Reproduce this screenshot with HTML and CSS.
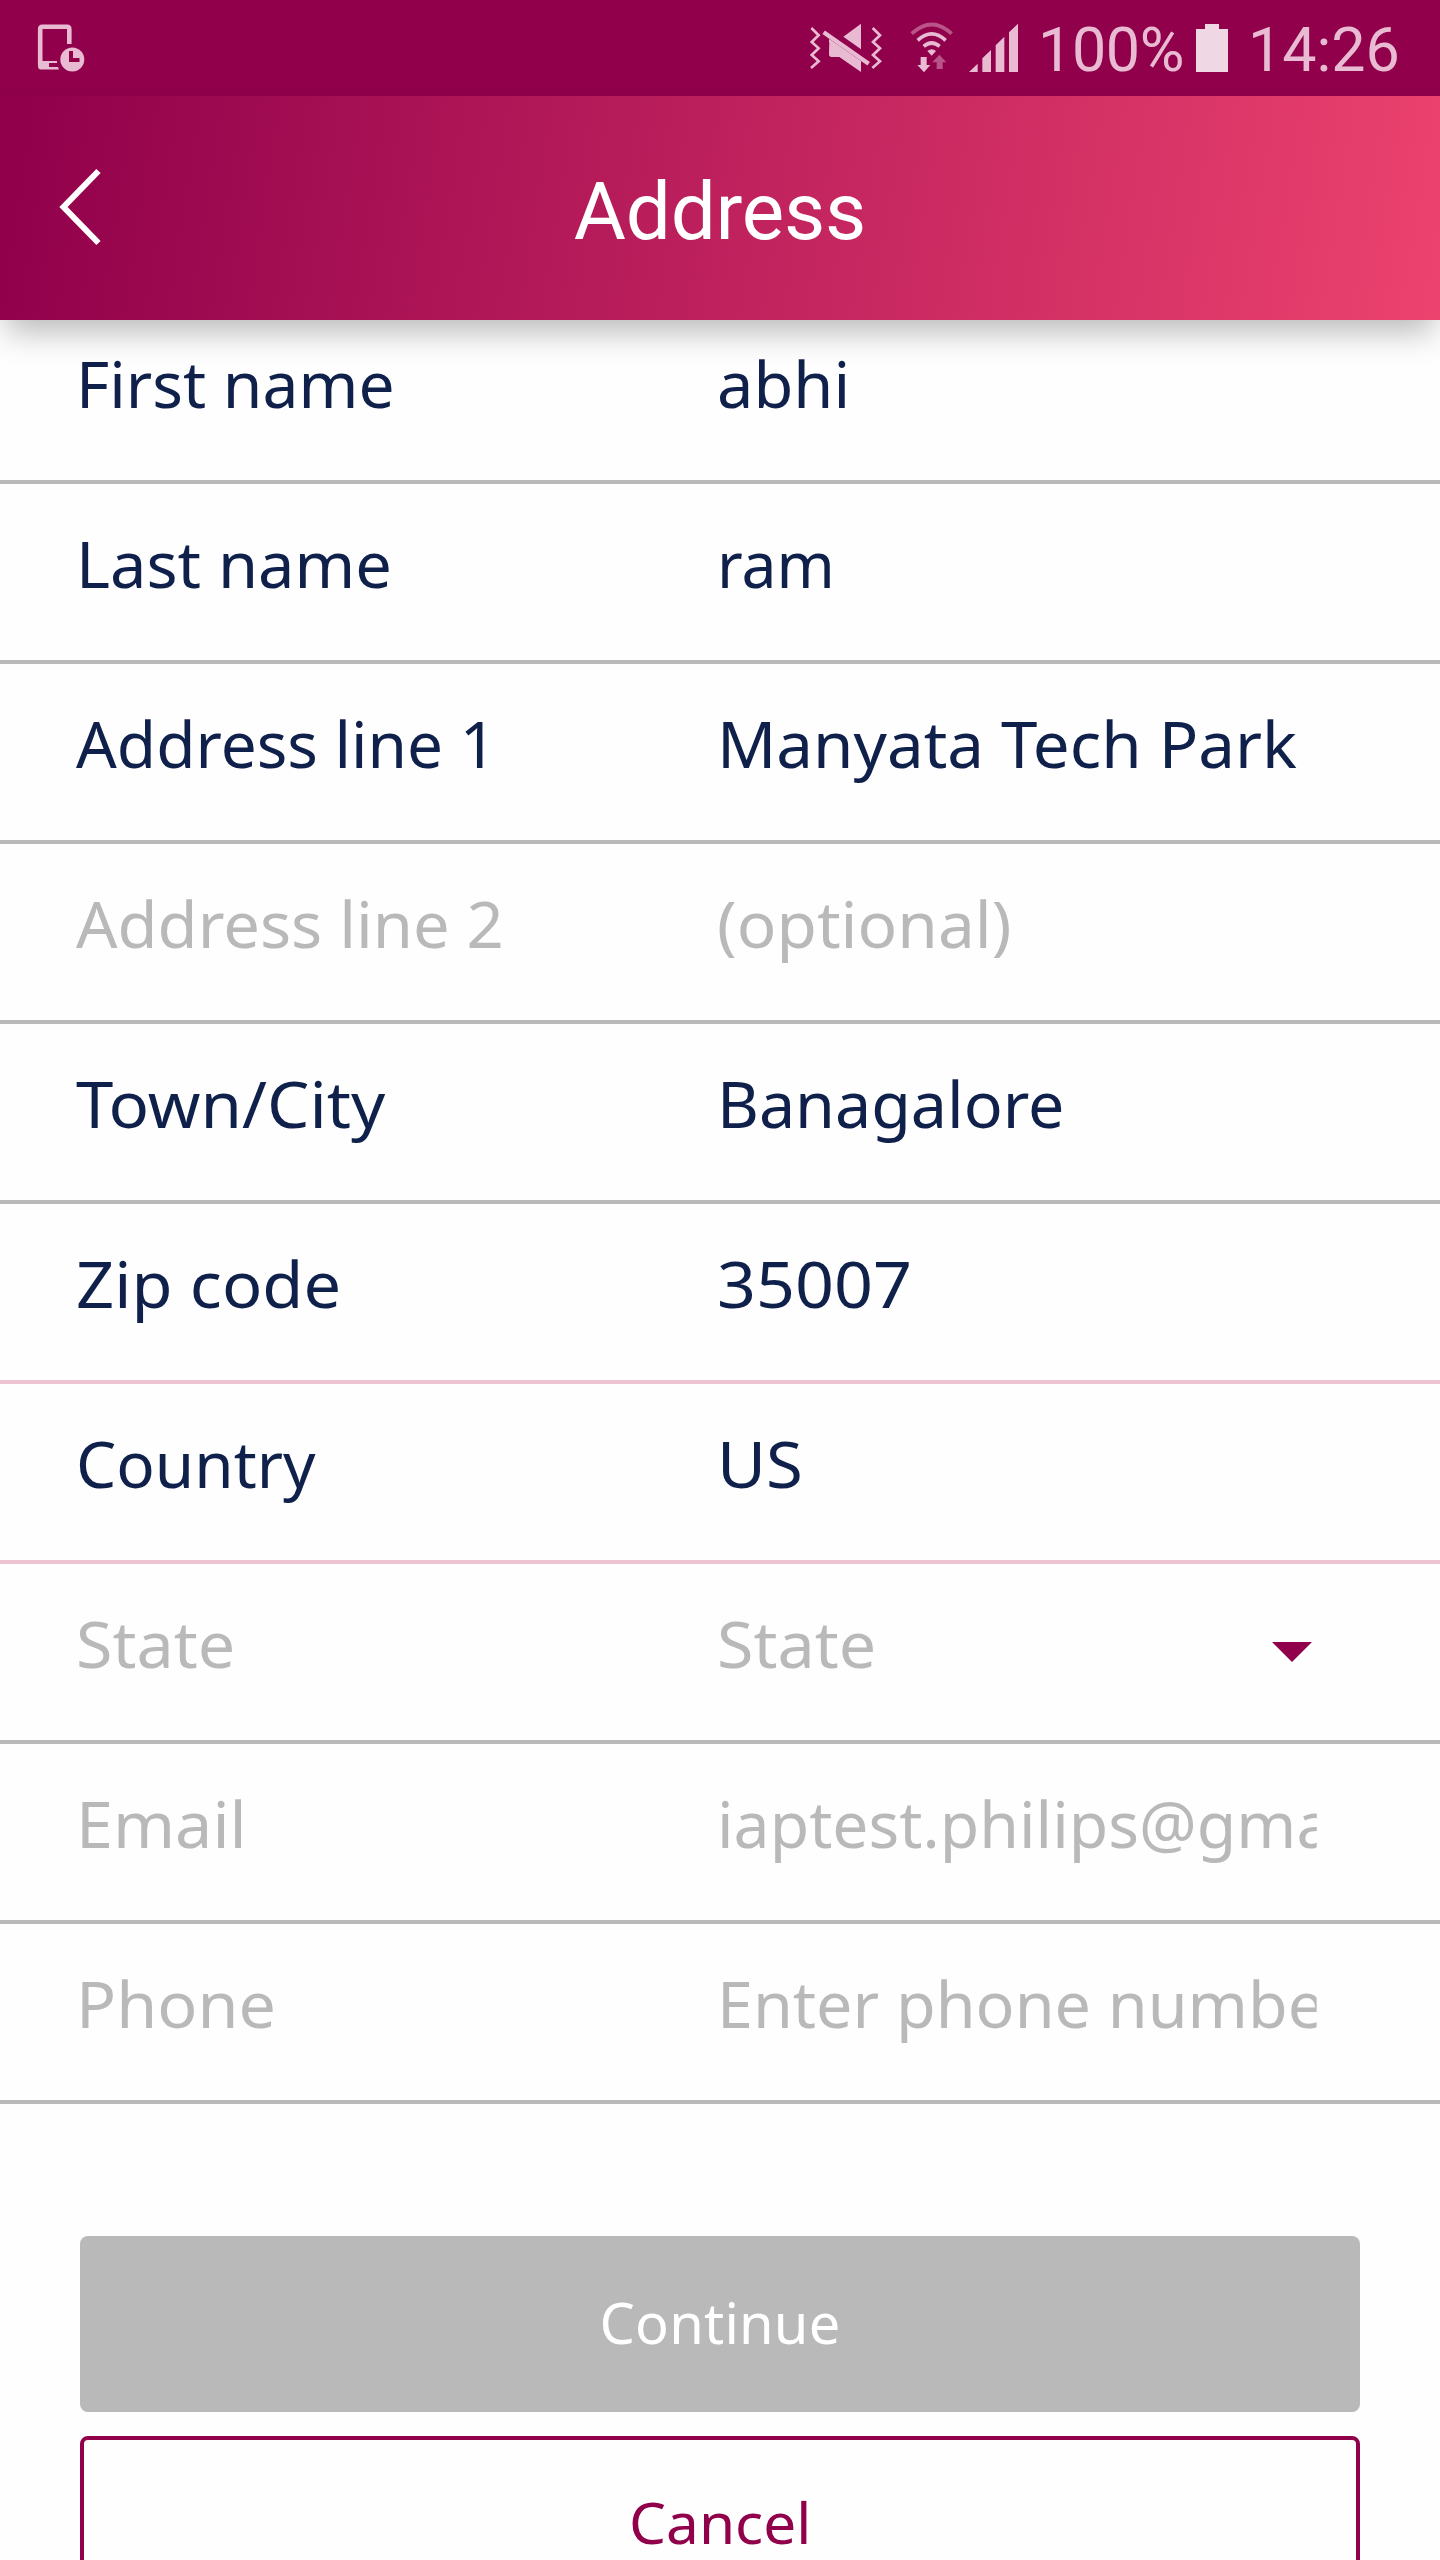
FILE: index.html
```
<!DOCTYPE html>
<html lang="en">
<head>
<meta charset="utf-8">
<title>Address</title>
<link rel="stylesheet" href="styles.css">
</head>
<body>
<div class="screen">
  <div class="status">
    <svg class="icon device" width="52" height="96" viewBox="36 0 52 96">
      <path d="M69.3 44V29q0-2.300-2.300-2.300H42.500q-2.300 0-2.300 2.300V65" fill="none" stroke="currentColor" stroke-width="4.600"/>
      <path d="M38 61H57V63H49V67H58L59 69.500H41Q38 69.500 38 66Z"/>
      <circle cx="72.300" cy="59.500" r="12"/>
      <path d="M71 51V60H79.500" fill="none" stroke="#90004b" stroke-width="4"/>
    </svg>
    <svg class="icon mute" width="74" height="96" viewBox="90 0 222 288">
      <g fill="none" stroke="currentColor" stroke-width="8">
        <path d="M94 84L116 106L95 126L116 145L95 165L116 184L93 204"/>
        <path d="M278 84L300 106L279 126L300 145L279 165L300 184L277 204"/>
      </g>
      <path d="M243 71V148L190 110Z"/>
      <path d="M148 121H163L243 178V216L178 171H155Q147 171 147 163Z"/>
      <path d="M131 97L266 191" stroke="#90004b" stroke-width="24"/>
      <path d="M147 126V117L154 121L243 183V205Z"/>
      <path d="M131 97L266 191" stroke="currentColor" stroke-width="13"/>
    </svg>
    <svg class="icon wifi" width="44" height="96" viewBox="390 0 132 288">
      <g fill="none" stroke="currentColor" stroke-width="11">
        <path d="M395 101Q455 46 515 101" opacity=".45"/>
        <path d="M413 121Q455 82 497 121"/>
        <path d="M431 139Q455 119 479 139"/>
      </g>
      <path d="M442 153Q455 143 468 153L455 167Z"/>
      <path d="M422 171H440V195H451L432 217L412 195H422Z"/>
      <path d="M470 207H488V187H499L478 164L457 187H470Z" opacity=".45"/>
    </svg>
    <svg class="icon signal" width="50" height="96" viewBox="567 0 150 288">
      <path d="M567 216L593 191V216ZM607 216V175L633 150V216ZM647 216V136L673 110V216ZM687 216V97L714 71V216Z"/>
    </svg>
    <span class="status-text percent">100%</span>
    <svg class="icon battery" width="32" height="96" viewBox="0 0 32 96"><path d="M9 24H23V29H32V72H0V29H9Z"/></svg>
    <span class="status-text clock">14:26</span>
  </div>

  <header class="header">
    <svg class="back" width="44" height="80" viewBox="58 167 44 80"><path d="M98.500 171L63.500 207L98.500 243" fill="none" stroke="#fff" stroke-width="6"/></svg>
    <h1 class="title">Address</h1>
  </header>

  <main class="form">
    <div class="row"><span class="label t-first">First name</span><span class="value t-abhi">abhi</span></div>
    <div class="row"><span class="label t-last">Last name</span><span class="value t-ram">ram</span></div>
    <div class="row"><span class="label t-line1">Address line 1</span><span class="value t-park">Manyata Tech Park</span></div>
    <div class="row muted"><span class="label t-line2">Address line 2</span><span class="value t-optional">(optional)</span></div>
    <div class="row"><span class="label t-town">Town/City</span><span class="value t-city">Banagalore</span></div>
    <div class="row pink"><span class="label t-zip">Zip code</span><span class="value t-digits">35007</span></div>
    <div class="row pink"><span class="label t-country">Country</span><span class="value t-us">US</span></div>
    <div class="row muted picker"><span class="label t-state">State</span><span class="value t-state">State</span><svg class="caret" width="40" height="20" viewBox="0 0 40 20"><path d="M0 0H40L20 20Z"/></svg></div>
    <div class="row muted"><span class="label t-email">Email</span><span class="value t-mail">iaptest.philips@gmail.com</span></div>
    <div class="row muted"><span class="label t-phone">Phone</span><span class="value t-enter">Enter phone number</span></div>
  </main>

  <div class="actions">
    <button class="button primary">Continue</button>
    <button class="button secondary"><span class="t-cancel">Cancel</span></button>
  </div>
</div>
</body>
</html>
```
FILE: styles.css
```
* { box-sizing: border-box; }
body { margin: 0; background: #fff; }
.screen {
  width: 1440px;
  height: 2560px;
  overflow: hidden;
  background: #fefefe;
  font-family: "Noto Sans", sans-serif;
}
.status {
  display: flex;
  align-items: flex-start;
  height: 96px;
  padding-left: 36px;
  background: #90004b;
  color: #e8bbd3;
}
.icon { display: block; flex: none; fill: currentColor; }
.mute { margin-left: 722px; }
.wifi { margin-left: 26px; }
.signal { margin-left: 15px; }
.status-text {
  font: 400 61px/100px Roboto, sans-serif;
  white-space: nowrap;
  flex: none;
}
.percent { width: 146px; margin-left: 18px; letter-spacing: -.4px; }
.percent, .clock { padding-left: 1px; }
.battery { margin-left: 13px; color: #efd7e3; }
.clock { margin-left: 19px; }

.header {
  position: relative;
  z-index: 1;
  display: grid;
  grid-template-columns: 102px 1fr 102px;
  height: 224px;
  background: linear-gradient(99deg, #90004b 1%, #ed436f 101%);
  box-shadow: 0 18px 30px -6px rgba(0, 0, 0, .27);
}
.back { margin: 71px 0 0 58px; }
.title {
  margin: 0;
  padding-top: 4px;
  text-align: center;
  color: #fff;
  font: 400 80px/224px Roboto, sans-serif;
  letter-spacing: -.2px;
}

.form { margin-top: -16px; }
.row {
  display: grid;
  grid-template-columns: 641px 600px;
  height: 180px;
  padding-left: 76px;
  border-bottom: 4px solid #b9b9b9;
  color: #0f204b;
  font-size: 63px;
  line-height: 159px;
  white-space: nowrap;
}
.row.pink { border-color: #ecc3d0; }
.row.muted { color: #b9b9b9; }
.row.picker { grid-template-columns: 641px 1fr 40px; padding-right: 128px; }
.label, .value { justify-self: start; transform-origin: 0 50%; }
.value { overflow: hidden; }
.caret { margin-top: 78px; fill: #90004b; }

/* The form face is set slightly wide; each text carries its own stretch. */
.t-first { transform: scaleX(1.018); }
.t-last { transform: scaleX(1.031); }
.t-line1 { transform: scaleX(1.015); }
.t-line2 { transform: scaleX(1.033); }
.t-town { transform: scaleX(1.065); }
.t-zip { transform: scaleX(1.06); }
.t-country { transform: scaleX(1.012); }
.t-state { transform: scaleX(1.055); }
.t-email { transform: scaleX(1.055); }
.t-phone { transform: scaleX(1.055); }
.t-abhi { transform: scaleX(1.03); }
.t-ram { transform: scaleX(.99); }
.t-park { transform: scaleX(1.039); }
.t-optional { transform: scaleX(1.043); }
.t-city { transform: scaleX(1.024); }
.t-digits { transform: scaleX(1.082); }
.t-us { transform: scaleX(1.065); }
.t-mail { width: 588px; transform: scaleX(1.02); }
.t-enter { width: 585px; transform: scaleX(1.025); }
.t-cancel { display: inline-block; transform: scaleX(1.045); }

.actions {
  display: flex;
  flex-direction: column;
  gap: 24px;
  padding: 132px 80px 0;
}
.button {
  height: 176px;
  padding: 0 0 4px;
  border: 0;
  border-radius: 8px;
  text-align: center;
  font: 400 56px/172px "Noto Sans", sans-serif;
}
.primary { background: #b9b9b9; color: #fff; letter-spacing: .2px; }
.secondary {
  border: 4px solid #90004b;
  background: #fefefe;
  color: #90004b;
  line-height: 164px;
}
```
